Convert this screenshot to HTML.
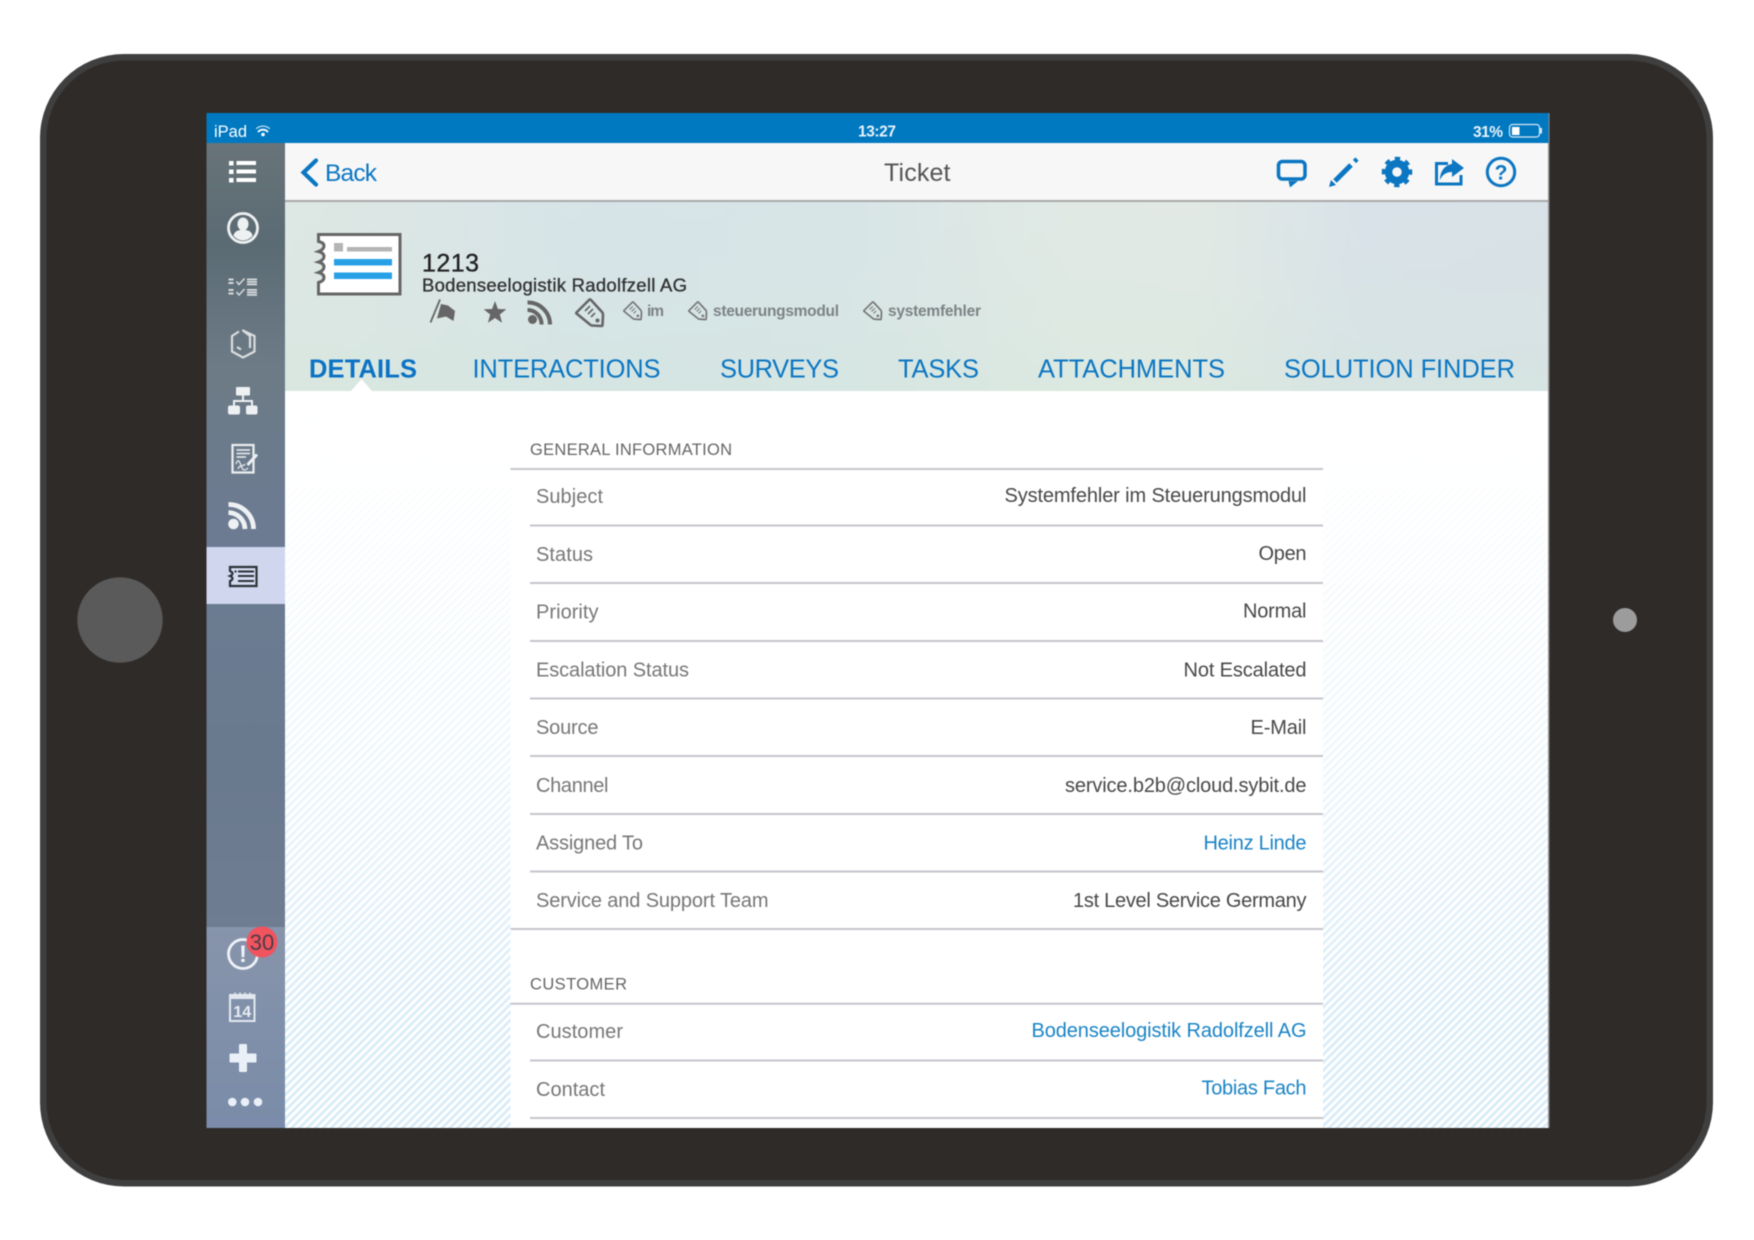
<!DOCTYPE html>
<html lang="en">
<head>
<meta charset="utf-8">
<title>Ticket</title>
<style>
html,body{margin:0;padding:0;background:#fff;width:1754px;height:1240px;overflow:hidden}
svg{display:block;filter:blur(.45px)}
text{font-family:"Liberation Sans",sans-serif}
.l{font-size:20px;fill:#777}
.v{font-size:20px;fill:#484848}
.a{font-size:20px;fill:#1a84c6}
.h{font-size:16.5px;fill:#666}
.t{font-size:25.5px;fill:#0b76c2}
.g{font-size:15.5px;font-weight:bold;fill:#7d8385}
.ln{stroke:#c5c5cc;stroke-width:2}
</style>
</head>
<body>
<svg width="1754" height="1240" viewBox="0 0 1754 1240" xmlns="http://www.w3.org/2000/svg">
<defs>
<linearGradient id="side" x1="0" y1="0" x2="0" y2="1">
<stop offset="0" stop-color="#687479"/><stop offset=".25" stop-color="#5b6b74"/><stop offset=".55" stop-color="#6d7b86"/><stop offset="1" stop-color="#6c7b93"/>
</linearGradient>
<linearGradient id="side2" x1="0" y1="0" x2="0" y2="1">
<stop offset="0" stop-color="#8794ab"/><stop offset="1" stop-color="#7a8ca9"/>
</linearGradient>
<linearGradient id="sidemid" x1="0" y1="0" x2="0" y2="1">
<stop offset="0" stop-color="#6b7b91"/><stop offset=".5" stop-color="#6a7a8e"/><stop offset="1" stop-color="#6f7d92"/>
</linearGradient>
<linearGradient id="heroA" x1="0" y1="0" x2="1" y2="0">
<stop offset="0" stop-color="#dde8e2"/><stop offset=".12" stop-color="#d9e6e4"/><stop offset=".25" stop-color="#d3e3e8"/><stop offset=".45" stop-color="#d6e5e6"/><stop offset=".62" stop-color="#e2ebe3"/><stop offset=".72" stop-color="#e3ebe3"/><stop offset=".85" stop-color="#d7e1e8"/><stop offset="1" stop-color="#d6e0e6"/>
</linearGradient>
<linearGradient id="heroB" x1="0" y1="0" x2="0" y2="1">
<stop offset="0" stop-color="#dfe6ea" stop-opacity=".25"/><stop offset="1" stop-color="#d6e7de" stop-opacity=".55"/>
</linearGradient>
<pattern id="st" width="5.6" height="5.6" patternUnits="userSpaceOnUse" patternTransform="rotate(45)">
<rect width="5.6" height="5.6" fill="#fff"/><rect width="2.8" height="5.6" fill="#d9ecf8"/>
</pattern>
<linearGradient id="fade" x1="0" y1="0" x2="0" y2="1">
<stop offset="0" stop-color="#fff" stop-opacity="1"/><stop offset=".12" stop-color="#fff" stop-opacity=".95"/><stop offset=".5" stop-color="#fff" stop-opacity=".6"/><stop offset=".85" stop-color="#fff" stop-opacity=".05"/><stop offset="1" stop-color="#fff" stop-opacity="0"/>
</linearGradient>
<g id="tag">
<path d="M1.5 14.5 14 2 Q15 1 16 2 L27 14 Q28 15 28 17 L27.5 27 Q27.5 28 26 28 L17 27.5 Q16 27.5 15 26.5 L1.5 15.5 Q1 15 1.5 14.5Z" fill="none" stroke="currentColor" stroke-width="2.6" stroke-linejoin="round"/>
<circle cx="22.5" cy="22.5" r="2" fill="currentColor"/>
<path d="M10 13 15 8M13 16 18 11M16 19 20 15" stroke="currentColor" stroke-width="1.6" fill="none"/>
</g>
</defs>

<!-- device -->
<rect x="40" y="54" width="1673" height="1132.500" rx="84" fill="#3f3f3f"/>
<rect x="46.500" y="60.500" width="1660" height="1119.500" rx="78" fill="#2f2b28"/>
<circle cx="120" cy="620" r="42.700" fill="#5a5a5a"/>
<circle cx="1625" cy="620" r="12" fill="#9c9c9c"/>

<!-- content background -->
<rect x="285" y="391" width="1264" height="737" fill="url(#st)"/>
<rect x="285" y="391" width="1264" height="737" fill="url(#fade)"/>
<rect x="510.500" y="391" width="812.500" height="737" fill="#fff"/>
<rect x="1548" y="113" width="1.500" height="1015" fill="#8d8d8d"/>

<!-- status bar -->
<rect x="206.500" y="113" width="1342" height="30" fill="#0079c1"/>
<text x="214" y="137" font-size="16.500" fill="#fff" textLength="33">iPad</text>
<g fill="none" stroke="#fff" stroke-linecap="round">
<path d="M256.500 128.500A10 10 0 0 1 269.500 128.500" stroke-width="1.200" opacity=".75"/>
<path d="M258.500 131.500A6.500 6.500 0 0 1 267.500 131.500" stroke-width="1.800"/>
</g>
<circle cx="263" cy="134.500" r="1.800" fill="#fff"/>
<text x="858" y="136.500" font-size="15.500" font-weight="bold" fill="#e9f3fa" textLength="38">13:27</text>
<text x="1473" y="137" font-size="15.500" font-weight="bold" fill="#e9f3fa" textLength="30">31%</text>
<rect x="1509.500" y="124.500" width="30" height="12.500" rx="3" fill="none" stroke="#d8e8f4" stroke-width="1.200"/>
<rect x="1512" y="127" width="7.500" height="8" fill="#fff"/>
<rect x="1540" y="128" width="2" height="5.500" fill="#d8e8f4"/>

<!-- nav bar -->
<rect x="285" y="143" width="1263" height="57" fill="#f7f7f7"/>
<rect x="285" y="200" width="1263" height="2" fill="#a9a9a9"/>
<path d="M316 160.500 303.500 172.500 316 184.500" fill="none" stroke="#0b76c2" stroke-width="4.200" stroke-linecap="round" stroke-linejoin="miter"/>
<text x="325" y="181" font-size="24.500" fill="#0b76c2" textLength="52">Back</text>
<text x="884" y="181" font-size="25" fill="#555" textLength="66.500">Ticket</text>

<g fill="none" stroke="#0b76c2">
<rect x="1278.500" y="161.500" width="26.500" height="17.500" rx="4" stroke-width="3.500"/>
<path d="M1288.500 181H1298L1290 187.500Z" fill="#0b76c2" stroke="none"/>
<path d="M1335 181 1351 165" stroke-width="5"/>
<path d="M1354.500 161.500 1357 159" stroke-width="4.500"/>
<path d="M1329 187 1331 180 1336 185Z" fill="#0b76c2" stroke="none"/>
<circle cx="1397" cy="172" r="12.500" stroke-dasharray="4.900 4.917" transform="rotate(-11 1397 172)" style="stroke-width:5.500"/>
<circle cx="1397" cy="172" r="8.500" stroke-width="7.500"/>
<path d="M1448 163.500H1436.500V184H1461V175" stroke-width="3"/>
<path d="M1452 159 1464 168 1452 177V172C1446 172 1442 175 1440 180 1440 171 1445 165 1452 164Z" fill="#0b76c2" stroke="none"/>
<circle cx="1501" cy="172" r="13.700" stroke-width="3"/>
</g>
<text x="1501" y="179.500" font-size="21" font-weight="bold" fill="#0b76c2" text-anchor="middle">?</text>

<!-- hero -->
<rect x="285" y="202" width="1263" height="189" fill="url(#heroA)"/>
<rect x="285" y="202" width="1263" height="189" fill="url(#heroB)"/>
<path d="M351 391 361.500 379 372 391Z" fill="#fff"/>

<path d="M318.500 234.500H400V294H318.500V282.500Q324 281 324 277.500T318.500 272.500Q324 270.500 324 267T318.500 262Q324 260 324 256.500T318.500 251.500Q324 249.500 324 246T318.500 241.500Z" fill="#fff" stroke="#666" stroke-width="3"/>
<rect x="334" y="243" width="9" height="8.500" fill="#b5b5b5"/>
<rect x="347" y="247" width="45" height="4.500" fill="#b5b5b5"/>
<rect x="334" y="259" width="58" height="6.500" fill="#27a0e6"/>
<rect x="334" y="272.500" width="58" height="6.500" fill="#27a0e6"/>

<text x="422" y="271.500" font-size="25" fill="#222" stroke="#222" stroke-width=".35" textLength="57">1213</text>
<text x="422" y="291.500" font-size="18.500" fill="#333" stroke="#333" stroke-width=".35" textLength="265">Bodenseelogistik Radolfzell AG</text>

<path d="M430.500 322.500 440 299.500" stroke="#666" stroke-width="1.800"/>
<path d="M441 304 448 305.500 455 311 453.500 321 446 316.500 437 318.500Z" fill="#666"/>
<polygon points="495,301 497.900,309 506.400,309.300 499.800,314.500 502.100,322.700 495,318 487.900,322.700 490.200,314.500 483.600,309.300 492.100,309" fill="#666"/>
<circle cx="532.500" cy="319.500" r="4.500" fill="#666"/>
<path d="M527.500 310A14 14 0 0 1 541.500 324.500M527.500 302.500A22 22 0 0 1 550 324.500" fill="none" stroke="#666" stroke-width="4"/>
<use href="#tag" transform="translate(575 298)" color="#666"/>
<use href="#tag" transform="translate(623 301) scale(.66)" color="#777"/>
<text class="g" x="647" y="316" textLength="17">im</text>
<use href="#tag" transform="translate(688 301) scale(.66)" color="#777"/>
<text class="g" x="713" y="316" textLength="126">steuerungsmodul</text>
<use href="#tag" transform="translate(863 301) scale(.66)" color="#777"/>
<text class="g" x="888" y="316" textLength="93">systemfehler</text>

<text class="t" x="309" y="377.500" font-weight="bold" textLength="108" style="fill:#0b72c4">DETAILS</text>
<text class="t" x="472.500" y="377.500" textLength="188">INTERACTIONS</text>
<text class="t" x="720" y="377.500" textLength="119">SURVEYS</text>
<text class="t" x="898" y="377.500" textLength="81">TASKS</text>
<text class="t" x="1038" y="377.500" textLength="187">ATTACHMENTS</text>
<text class="t" x="1284" y="377.500" textLength="231">SOLUTION FINDER</text>

<!-- sidebar -->
<rect x="206.500" y="143" width="78.500" height="404" fill="url(#side)"/>
<rect x="206.500" y="547" width="78.500" height="57" fill="#cfd6ee"/>
<rect x="206.500" y="604" width="78.500" height="323" fill="url(#sidemid)"/>
<rect x="206.500" y="927" width="78.500" height="201" fill="url(#side2)"/>

<g fill="#fff">
<rect x="229" y="161" width="4.500" height="4.500"/><rect x="236.500" y="161" width="19.500" height="4"/>
<rect x="229" y="169.500" width="4.500" height="4.500"/><rect x="236.500" y="169.500" width="19.500" height="4"/>
<rect x="229" y="178" width="4.500" height="4.500"/><rect x="236.500" y="178" width="19.500" height="4"/>
</g>
<circle cx="243" cy="228" r="14.500" fill="none" stroke="#eef1f2" stroke-width="2.800"/>
<ellipse cx="243" cy="224" rx="5.500" ry="6.500" fill="#eef1f2"/>
<path d="M233.500 236Q234 231 240 230H246Q252 231 252.500 236Q248 240.500 243 240.500T233.500 236Z" fill="#eef1f2"/>

<g fill="#d6dadc" stroke="none">
<rect x="228.500" y="278.500" width="5" height="2"/><rect x="228.500" y="282" width="5" height="2"/>
<rect x="228.500" y="289" width="5" height="2"/><rect x="228.500" y="292.500" width="5" height="2"/>
<rect x="247" y="278.500" width="10" height="1.800"/><rect x="247" y="281" width="10" height="1.800"/><rect x="247" y="283.500" width="10" height="1.800"/>
<rect x="247" y="289" width="10" height="1.800"/><rect x="247" y="291.500" width="10" height="1.800"/><rect x="247" y="294" width="10" height="1.800"/>
</g>
<path d="M236.500 281.500 239 284.500 244.500 278.500M236.500 292 239 295 244.500 289" fill="none" stroke="#d6dadc" stroke-width="1.500"/>

<path d="M239 331.500 232 336V351.500L243 357.500 254.500 351.500V336L243 330.500 250 336V348" fill="none" stroke="#d9dde0" stroke-width="2.200" stroke-linejoin="round"/>
<path d="M237 347 241 349.500" stroke="#d9dde0" stroke-width="2.200"/>

<g fill="#eef1f3">
<rect x="236" y="387" width="14" height="8.500" rx="1"/>
<rect x="228" y="405.500" width="12" height="9" rx="2"/>
<rect x="246" y="405.500" width="11.500" height="9" rx="2"/>
</g>
<path d="M243 395V401M234 406V401H252V406" fill="none" stroke="#eef1f3" stroke-width="2"/>

<rect x="232.500" y="445" width="21" height="27.500" fill="none" stroke="#eceff1" stroke-width="2.200"/>
<path d="M236.500 450H250M236.500 453.500H250M236.500 457H246" stroke="#eceff1" stroke-width="1.500"/>
<path d="M236 464Q238 458 240 463T245 464M238 469Q240 464 242 468T248 468" fill="none" stroke="#eceff1" stroke-width="1.200"/>
<path d="M247.500 465 257 454.500" stroke="#eceff1" stroke-width="3"/>

<circle cx="233.500" cy="524" r="5.300" fill="#eef1f3"/>
<path d="M228.500 512.500A17 17 0 0 1 245 529M228.500 504.500A24.500 24.500 0 0 1 253.500 529" fill="none" stroke="#eef1f3" stroke-width="4.800"/>

<path d="M230 567H256.500V586H230V581Q232.500 580 232.500 578.500T230 576Q232.500 575 232.500 573.500T230 571Z" fill="#d5dbf0" stroke="#2b3338" stroke-width="2.200"/>
<path d="M238 571.500H254M238 576H254M238 581H254" stroke="#2b3338" stroke-width="2"/>
<rect x="234.500" y="570.500" width="2" height="2" fill="#2b3338"/>

<circle cx="243" cy="954" r="14.500" fill="none" stroke="#eef2f7" stroke-width="2.800"/>
<text x="243" y="962" font-size="24" font-weight="bold" fill="#eef2f7" text-anchor="middle">!</text>
<circle cx="262" cy="942" r="15.500" fill="#f0545f"/>
<text x="262" y="950" font-size="22" fill="#4a3d46" text-anchor="middle">30</text>

<rect x="230" y="995" width="24.500" height="26" fill="none" stroke="#e2e8f0" stroke-width="2"/>
<rect x="230" y="995" width="24.500" height="4" fill="#e2e8f0"/>
<path d="M235 992.500V997M240 992.500V997M245 992.500V997M250 992.500V997" stroke="#e2e8f0" stroke-width="1.500"/>
<text x="242.300" y="1017" font-size="16" font-weight="bold" fill="#e8edf4" text-anchor="middle">14</text>

<rect x="229.500" y="1053.500" width="27" height="9" rx="1" fill="#eaf0f7"/>
<rect x="239" y="1044" width="8" height="28" rx="1" fill="#eaf0f7"/>
<circle cx="232.300" cy="1102" r="4.300" fill="#eaf0f7"/>
<circle cx="245" cy="1102" r="4.300" fill="#eaf0f7"/>
<circle cx="258" cy="1102" r="4.300" fill="#eaf0f7"/>

<!-- sections -->
<text class="h" x="530" y="455" textLength="202">GENERAL INFORMATION</text>
<line class="ln" x1="510.500" y1="469" x2="1323" y2="469"/>
<line class="ln" x1="530" y1="525.500" x2="1323" y2="525.500"/>
<line class="ln" x1="530" y1="583" x2="1323" y2="583"/>
<line class="ln" x1="530" y1="641" x2="1323" y2="641"/>
<line class="ln" x1="530" y1="698.500" x2="1323" y2="698.500"/>
<line class="ln" x1="530" y1="756" x2="1323" y2="756"/>
<line class="ln" x1="530" y1="814" x2="1323" y2="814"/>
<line class="ln" x1="530" y1="871.500" x2="1323" y2="871.500"/>
<line class="ln" x1="510.500" y1="929" x2="1323" y2="929"/>

<text class="l" x="536" y="503" textLength="67">Subject</text>
<text class="v" x="1004.500" y="502" textLength="302">Systemfehler im Steuerungsmodul</text>
<text class="l" x="536" y="561" textLength="57">Status</text>
<text class="v" x="1258.500" y="560" textLength="48">Open</text>
<text class="l" x="536" y="618.500" textLength="62.500">Priority</text>
<text class="v" x="1243" y="617.500" textLength="63.500">Normal</text>
<text class="l" x="536" y="676.500" textLength="153">Escalation Status</text>
<text class="v" x="1183.500" y="676.500" textLength="123">Not Escalated</text>
<text class="l" x="536" y="734" textLength="62.500">Source</text>
<text class="v" x="1250.500" y="734" textLength="56">E-Mail</text>
<text class="l" x="536" y="792" textLength="72.500">Channel</text>
<text class="v" x="1065" y="792" textLength="241.500">service.b2b@cloud.sybit.de</text>
<text class="l" x="536" y="849.500" textLength="107">Assigned To</text>
<text class="a" x="1203.500" y="849.500" textLength="103">Heinz Linde</text>
<text class="l" x="536" y="907" textLength="232.500">Service and Support Team</text>
<text class="v" x="1073" y="907" textLength="233.500">1st Level Service Germany</text>

<text class="h" x="530" y="989.500" textLength="97">CUSTOMER</text>
<line class="ln" x1="510.500" y1="1003.700" x2="1323" y2="1003.700"/>
<line class="ln" x1="530" y1="1060.500" x2="1323" y2="1060.500"/>
<line class="ln" x1="530" y1="1118" x2="1323" y2="1118"/>
<text class="l" x="536" y="1038" textLength="87">Customer</text>
<text class="a" x="1031.500" y="1037" textLength="275">Bodenseelogistik Radolfzell AG</text>
<text class="l" x="536" y="1096" textLength="69">Contact</text>
<text class="a" x="1201.500" y="1094.500" textLength="105">Tobias Fach</text>
</svg>
</body>
</html>
